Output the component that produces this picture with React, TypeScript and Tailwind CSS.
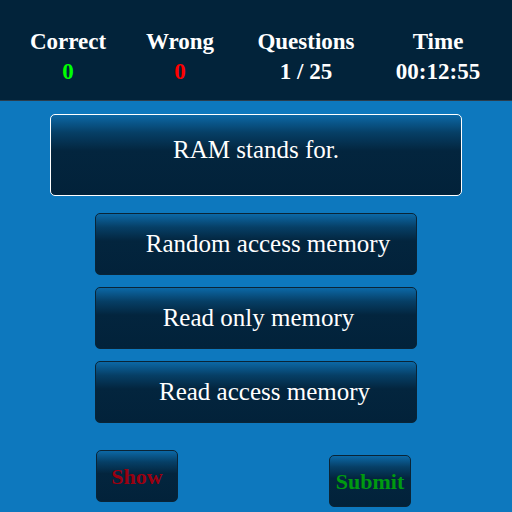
import React from "react";

const serif = { fontFamily: '"Liberation Serif", "Times New Roman", serif' };

function Stat({ label, value, color, width }: { label: string; value: string; color: string; width: string }) {
  return (
    <div className={`flex flex-col items-center ${width}`}>
      <div className="text-[23px] font-bold leading-[30px] text-white">{label}</div>
      <div className={`text-[23px] font-bold leading-[30px] ${color}`}>{value}</div>
    </div>
  );
}

export default function App() {
  const grad = "bg-[linear-gradient(to_bottom,#0c68a6_0%,#063f66_22%,#03253e_45%,#02223a_100%)]";
  return (
    <div className="w-[512px] h-[512px] bg-[#0d78be] overflow-hidden" style={serif}>
      <div className="h-[101px] bg-[#02233a] border-b border-[#2a3d4d] flex pt-[27px]">
        <Stat label="Correct" value="0" color="text-[#00ff00]" width="w-[136px]" />
        <Stat label="Wrong" value="0" color="text-[#ff0000]" width="w-[88px]" />
        <Stat label="Questions" value="1 / 25" color="text-white" width="w-[164px]" />
        <Stat label="Time" value="00:12:55" color="text-white" width="w-[100px]" />
      </div>
      <div className="flex flex-col items-center">
        <div className={`mt-[13px] w-[412px] h-[82px] rounded-[5px] border border-white ${grad} flex items-center justify-center text-[25px] text-white pb-[10px]`}>
          RAM stands for.
        </div>
        <div className="mt-[17px] flex flex-col gap-[12px]">
          <div className={`w-[322px] h-[62px] rounded-[5px] border border-[#0a2436] ${grad} flex items-center justify-center text-[25px] text-white pl-[24px]`}>
            Random access memory
          </div>
          <div className={`w-[322px] h-[62px] rounded-[5px] border border-[#0a2436] ${grad} flex items-center justify-center text-[25px] text-white pl-[5px]`}>
            Read only memory
          </div>
          <div className={`w-[322px] h-[62px] rounded-[5px] border border-[#0a2436] ${grad} flex items-center justify-center text-[25px] text-white pl-[17px]`}>
            Read access memory
          </div>
        </div>
      </div>
      <div className="flex items-start mt-[27px] ml-[96px] gap-[151px]">
        <div className={`w-[82px] h-[52px] rounded-[5px] border border-[#0a2436] ${grad} flex items-center justify-center text-[22px] font-bold text-[#9a0010]`}>
          Show
        </div>
        <div className={`mt-[5px] w-[82px] h-[52px] rounded-[5px] border border-[#0a2436] ${grad} flex items-center justify-center text-[22px] font-bold text-[#009a10]`}>
          Submit
        </div>
      </div>
    </div>
  );
}
